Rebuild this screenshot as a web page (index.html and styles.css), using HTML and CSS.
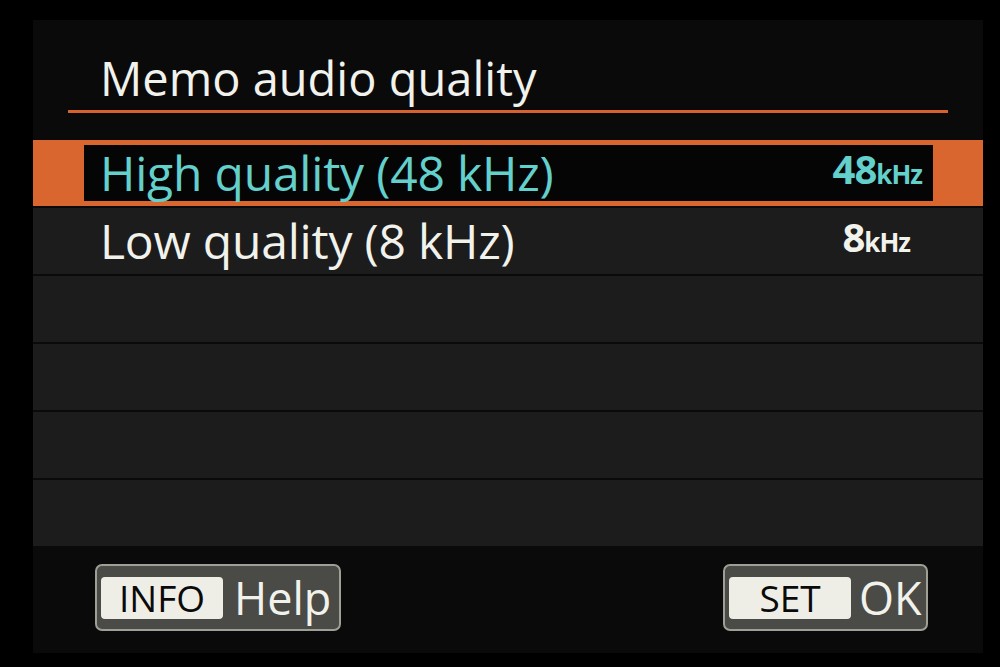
FILE: index.html
```html
<!DOCTYPE html>
<html lang="en">
<head>
<meta charset="utf-8">
<title>Memo audio quality</title>
<link rel="stylesheet" href="styles.css">
</head>
<body>
<div class="screen">
  <div class="title">Memo audio quality</div>
  <div class="rule"></div>
  <div class="list">
    <div class="row row-selected">
      <div class="sel-box">
        <span class="label">High quality (48 kHz)</span>
        <span class="value"><span class="num">48</span><span class="unit">kHz</span></span>
      </div>
    </div>
    <div class="row row-plain">
      <span class="label">Low quality (8 kHz)</span>
      <span class="value"><span class="num">8</span><span class="unit">kHz</span></span>
    </div>
    <div class="row"></div>
    <div class="row"></div>
    <div class="row"></div>
    <div class="row"></div>
  </div>
  <div class="footer">
    <div class="btn btn-info">
      <span class="key">INFO</span>
      <span class="btn-text btn-help">Help</span>
    </div>
    <div class="btn btn-set">
      <span class="key">SET</span>
      <span class="btn-text btn-ok">OK</span>
    </div>
  </div>
</div>
</body>
</html>
```

FILE: styles.css
```css
html, body {
  margin: 0;
  padding: 0;
  background: #000;
  width: 1000px;
  height: 667px;
  overflow: hidden;
}

body {
  font-family: "Open Sans", "DejaVu Sans Condensed", sans-serif;
  font-stretch: 100%;
}

.screen {
  margin: 20px 0 0 33px;
  width: 950px;
  height: 633px;
  background: #0a0a0a;
  display: flex;
  flex-direction: column;
}

.title {
  margin: 30px 0 0 67px;
  font-size: 47px;
  line-height: 56px;
  color: #f2f2ec;
}

.rule {
  margin: 4px 0 0 35px;
  width: 880px;
  height: 3px;
  background: #d8622e;
}

.list {
  margin-top: 27px;
  display: flex;
  flex-direction: column;
  gap: 2px;
}

.row {
  height: 66px;
  background: #1c1c1c;
  box-sizing: border-box;
  display: flex;
  align-items: center;
}

.row-selected {
  background: #d9652f;
  padding: 5px 50px 5px 51px;
  align-items: stretch;
}

.sel-box {
  flex: 1;
  background: #050505;
  display: flex;
  align-items: center;
  justify-content: space-between;
  padding: 0 11px 0 16px;
}

.row-plain {
  padding: 0 73px 0 67px;
  justify-content: space-between;
}

.label {
  font-size: 48px;
  line-height: 56px;
  letter-spacing: -0.2px;
  color: #f2f2ec;
}

.row-selected .label,
.row-selected .value {
  color: #63d0cc;
}

.value {
  color: #f2f2ec;
  font-weight: 700;
  line-height: 56px;
  font-stretch: 100%;
  letter-spacing: -1px;
}

.num {
  font-size: 40px;
}

.unit {
  font-size: 26px;
}

.footer {
  margin-top: 18px;
  display: flex;
  justify-content: space-between;
  padding: 0 55px 0 62px;
}

.btn {
  height: 67px;
  box-sizing: border-box;
  border: 2px solid #a09f95;
  border-radius: 7px;
  background: #4a4a47;
  display: flex;
  align-items: center;
  padding: 0 4px;
}

.btn-info {
  width: 246px;
}

.btn-set {
  width: 205px;
}

.key {
  width: 122px;
  height: 42px;
  background: #eeeee7;
  border-radius: 4px;
  color: #0a0a0a;
  font-size: 37px;
  line-height: 42px;
  text-align: center;
}

.btn-text {
  color: #f2f2ec;
}

.btn-help {
  margin-left: 11px;
  font-size: 45px;
}

.btn-ok {
  margin-left: 8px;
  font-size: 45px;
}
```
